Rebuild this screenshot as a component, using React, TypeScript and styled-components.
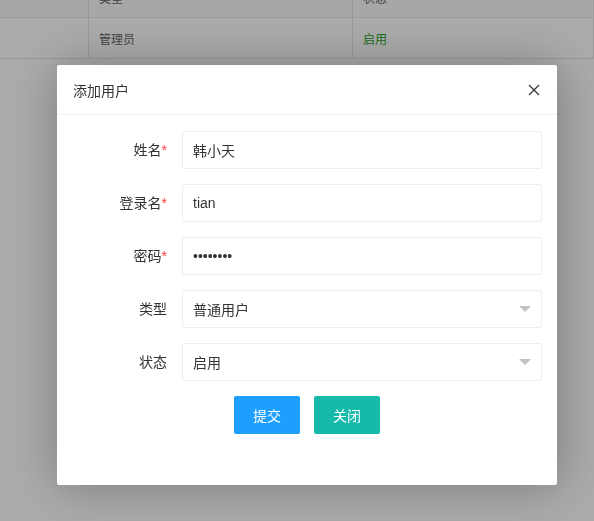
import styled, { createGlobalStyle } from "styled-components";

const GlobalStyle = createGlobalStyle`
  html, body {
    margin: 0;
    padding: 0;
    background: #fff;
    font-family: "Liberation Sans", "Noto Sans CJK SC", sans-serif;
    font-size: 14px;
    color: #333;
  }
`;

type Field = {
  label: string;
  required?: boolean;
  value: string;
  kind: "text" | "password" | "select";
};

const fields: Field[] = [
  { label: "姓名", required: true, value: "韩小天", kind: "text" },
  { label: "登录名", required: true, value: "tian", kind: "text" },
  { label: "密码", required: true, value: "12345678", kind: "password" },
  { label: "类型", value: "普通用户", kind: "select" },
  { label: "状态", value: "启用", kind: "select" },
];

function App() {
  return (
    <>
      <GlobalStyle />
      <Page>
        <Table>
          <Row $head>
            <Cell $w={89} />
            <Cell $w={264}>类型</Cell>
            <Cell $w={241}>状态</Cell>
          </Row>
          <Row>
            <Cell $w={89} />
            <Cell $w={264}>管理员</Cell>
            <Cell $w={241}>
              <Enabled>启用</Enabled>
            </Cell>
          </Row>
        </Table>
      </Page>

      <Shade>
        <Dialog>
          <Title>
            添加用户
            <Close aria-label="close">
              <svg width="12" height="12" viewBox="0 0 12 12">
                <path
                  d="M1 1 L11 11 M11 1 L1 11"
                  stroke="#333"
                  strokeWidth="1.2"
                  fill="none"
                />
              </svg>
            </Close>
          </Title>
          <Form>
            {fields.map((f) => (
              <FormItem key={f.label}>
                <Label>
                  {f.label}
                  {f.required && <Star>*</Star>}
                </Label>
                <InputBlock>
                  {f.kind === "select" ? (
                    <SelectBox>
                      {f.value}
                      <Arrow />
                    </SelectBox>
                  ) : (
                    <Input type={f.kind} defaultValue={f.value} readOnly />
                  )}
                </InputBlock>
              </FormItem>
            ))}
            <Buttons>
              <Button $color="#1E9FFF">提交</Button>
              <Button $color="#16baaa">关闭</Button>
            </Buttons>
          </Form>
        </Dialog>
      </Shade>
    </>
  );
}

export default App;

const Page = styled.div`
  width: 594px;
  height: 521px;
  overflow: hidden;
`;

const Table = styled.div`
  margin-top: -23px;
  display: flex;
  flex-direction: column;
`;

const Row = styled.div<{ $head?: boolean }>`
  display: flex;
  height: 41px;
  box-sizing: border-box;
  border-bottom: 1px solid #e6e6e6;
  background: ${(p) => (p.$head ? "#fafafa" : "#fff")};
`;

const Cell = styled.div<{ $w: number }>`
  width: ${(p) => p.$w}px;
  flex-shrink: 0;
  box-sizing: border-box;
  border-right: 1px solid #e6e6e6;
  padding: 0 10px;
  display: flex;
  align-items: center;
  font-size: 12px;
  color: #666;
`;

const Enabled = styled.span`
  color: #2aa52a;
`;

const Shade = styled.div`
  position: fixed;
  inset: 0;
  background: rgba(0, 0, 0, 0.33);
  padding: 65px 0 0 57px;
  box-sizing: border-box;
`;

const Dialog = styled.div`
  width: 500px;
  height: 420px;
  background: #fff;
  border-radius: 2px;
  box-shadow: 1px 1px 50px rgba(0, 0, 0, 0.3);
  display: flex;
  flex-direction: column;
`;

const Title = styled.div`
  height: 50px;
  box-sizing: border-box;
  border-bottom: 1px solid #f0f0f0;
  padding: 0 17px 0 16px;
  display: flex;
  align-items: center;
  justify-content: space-between;
  font-size: 14px;
  color: #333;
`;

const Close = styled.span`
  display: flex;
  width: 12px;
  height: 12px;
  cursor: pointer;
`;

const Form = styled.div`
  padding: 16px 15px 0;
  display: flex;
  flex-direction: column;
  gap: 15px;
`;

const FormItem = styled.div`
  display: flex;
  align-items: center;
`;

const Label = styled.label`
  width: 80px;
  padding: 0 15px;
  text-align: right;
  font-size: 14px;
  line-height: 20px;
  color: #333;
`;

const Star = styled.span`
  color: #ff3b3b;
`;

const InputBlock = styled.div`
  flex: 1;
`;

const Input = styled.input`
  display: block;
  width: 100%;
  height: 38px;
  box-sizing: border-box;
  border: 1px solid #eee;
  border-radius: 2px;
  padding: 0 10px;
  font-family: "Liberation Sans", "Noto Sans CJK SC", sans-serif;
  font-size: 14px;
  color: #333;
  outline: none;
`;

const SelectBox = styled.div`
  position: relative;
  height: 38px;
  box-sizing: border-box;
  border: 1px solid #eee;
  border-radius: 2px;
  padding: 0 10px;
  display: flex;
  align-items: center;
  font-size: 14px;
  color: #333;
`;

const Arrow = styled.i`
  position: absolute;
  right: 10px;
  top: 50%;
  margin-top: -3px;
  width: 0;
  height: 0;
  border-style: solid;
  border-width: 6px 6px 0;
  border-color: #c2c2c2 transparent transparent;
`;

const Buttons = styled.div`
  display: flex;
  justify-content: center;
  gap: 14px;
`;

const Button = styled.button<{ $color: string }>`
  height: 38px;
  padding: 0 19px;
  border: none;
  border-radius: 2px;
  background: ${(p) => p.$color};
  color: #fff;
  font-family: "Liberation Sans", "Noto Sans CJK SC", sans-serif;
  font-size: 14px;
  cursor: pointer;
`;
